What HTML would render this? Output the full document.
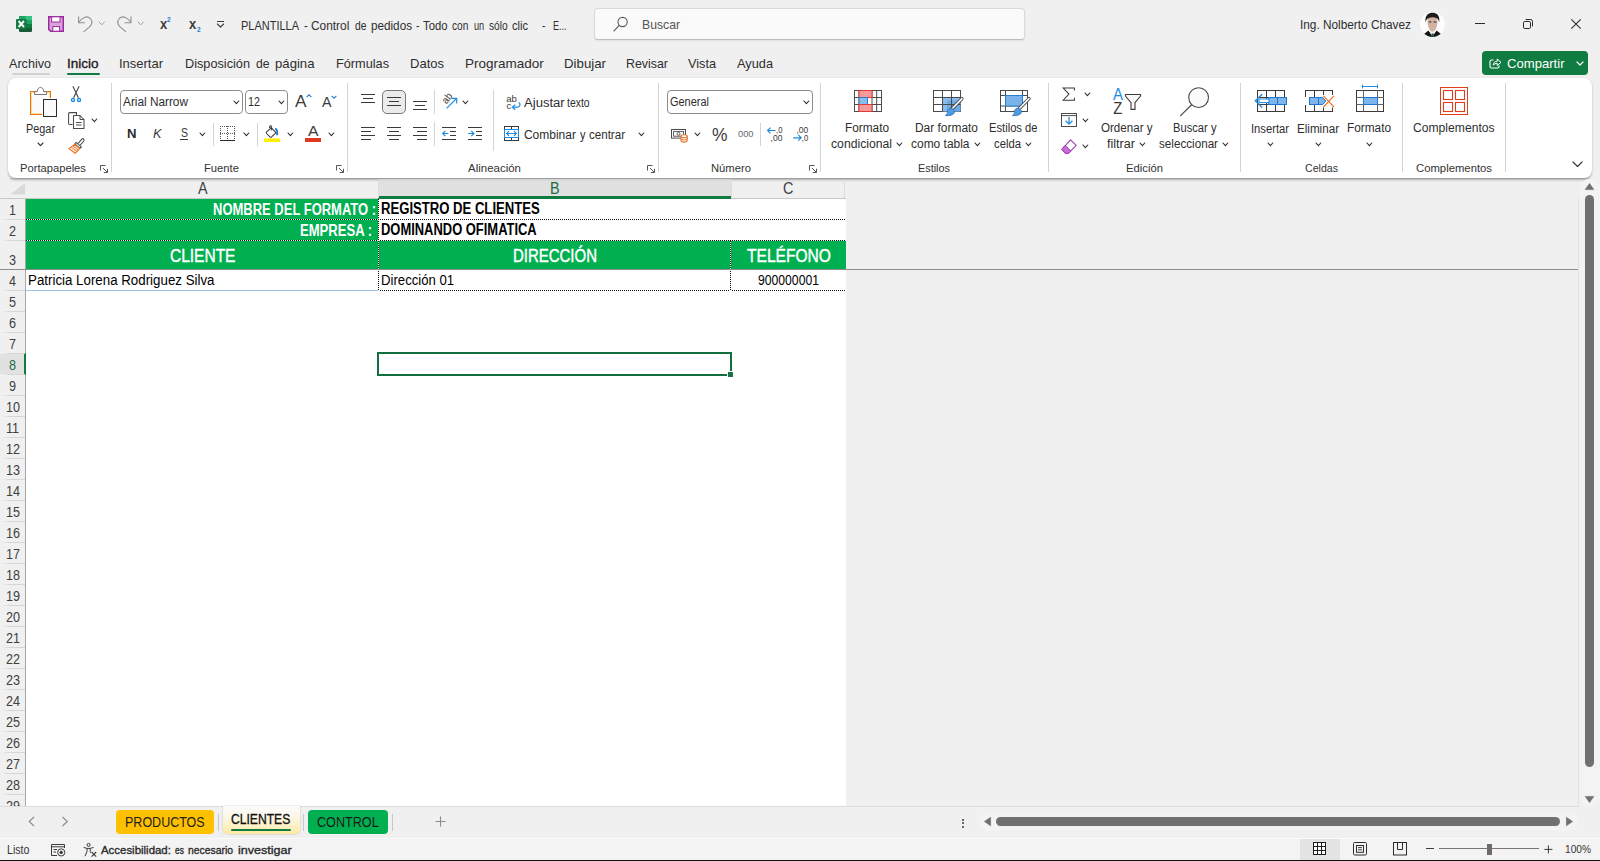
<!DOCTYPE html>
<html lang="es"><head><meta charset="utf-8"><title>Excel</title>
<style>
html,body{margin:0;padding:0;}
body{width:1600px;height:861px;position:relative;overflow:hidden;background:#f0f0f0;font-family:"Liberation Sans",sans-serif;}
body div,body svg,body span.t{position:absolute;}
span.t{white-space:pre;line-height:1;transform-origin:0 50%;}
svg{overflow:visible;}
</style></head><body>
<svg style="left:16px;top:16px;" width="16" height="16" viewBox="0 0 16 16">
<rect x="3" y="0" width="13" height="16" rx="1" fill="#185c37"/>
<rect x="3" y="0" width="13" height="8" fill="#21a366"/>
<rect x="9.5" y="0" width="6.5" height="4" fill="#33c481"/>
<rect x="3" y="4" width="6.5" height="4" fill="#107c41"/>
<rect x="9.5" y="8" width="6.5" height="4" fill="#107c41"/>
<rect x="0" y="3" width="10.7" height="10" rx="1" fill="#107c41"/>
<path d="M2.6 5 L8 11 M8 5 L2.6 11" stroke="#fff" stroke-width="1.9" fill="none"/>
</svg>
<svg style="left:48px;top:16px;" width="16" height="16" viewBox="0 0 16 16">
<path d="M0.75 0.75 H15.25 V15.25 H2.6 L0.75 13.4 Z" fill="#dba3dc" stroke="#9a2a9c" stroke-width="1.5"/>
<rect x="3.6" y="0.8" width="8.4" height="5.2" fill="#fdfdfd" stroke="#9a2a9c" stroke-width="1"/>
<rect x="4.8" y="10.6" width="6.8" height="4.6" fill="#fdfdfd" stroke="#9a2a9c" stroke-width="1"/>
</svg>
<svg style="left:78px;top:16px;" width="15" height="16" viewBox="0 0 15 16">
<path d="M0.6 0.5 V6.8 H7" fill="none" stroke="#919191" stroke-width="1.1"/>
<path d="M0.8 6.6 C3.5 1.5 9 -0.8 12.3 2.5 C15 5.6 13.8 8.6 11.5 10.8 L5.6 15.8" fill="none" stroke="#919191" stroke-width="1.1"/>
</svg>
<svg style="left:98.25px;top:21.1px;" width="7.5" height="4.8" viewBox="0 0 7.5 4.8"><path d="M1 1 L3.75 3.8 L6.5 1" fill="none" stroke="#a0a0a0" stroke-width="1" stroke-linecap="round" stroke-linejoin="round"/></svg>
<svg style="left:117px;top:16px;" width="15" height="16" viewBox="0 0 15 16">
<g transform="translate(14.6,0) scale(-1,1)">
<path d="M0.6 0.5 V6.8 H7" fill="none" stroke="#919191" stroke-width="1.1"/>
<path d="M0.8 6.6 C3.5 1.5 9 -0.8 12.3 2.5 C15 5.6 13.8 8.6 11.5 10.8 L5.6 15.8" fill="none" stroke="#919191" stroke-width="1.1"/>
</g>
</svg>
<svg style="left:137.25px;top:21.1px;" width="7.5" height="4.8" viewBox="0 0 7.5 4.8"><path d="M1 1 L3.75 3.8 L6.5 1" fill="none" stroke="#a0a0a0" stroke-width="1" stroke-linecap="round" stroke-linejoin="round"/></svg>
<span class="t" style="left:160.00px;top:17px;font-size:14px;color:#3b3b3b;transform:scaleX(0.9250);font-weight:700;">x</span>
<span class="t" style="left:167.30px;top:16px;font-size:7px;color:#1e78d0;transform:scaleX(0.9250);font-weight:700;">2</span>
<span class="t" style="left:189.00px;top:17px;font-size:14px;color:#3b3b3b;transform:scaleX(0.9250);font-weight:700;">x</span>
<span class="t" style="left:196.50px;top:26px;font-size:7px;color:#1e78d0;transform:scaleX(0.9250);font-weight:700;">2</span>
<div style="left:217px;top:21px;width:7px;height:1px;background:#3b3b3b;"></div>
<svg style="left:216px;top:23px;" width="9" height="6" viewBox="0 0 9 6"><path d="M1.4 1 L4.5 4.1 L7.6 1" stroke="#3b3b3b" stroke-width="1.1" fill="none" stroke-linejoin="round" stroke-linecap="round"/></svg>
<span class="t" style="left:241.30px;top:19px;font-size:13.3px;color:#2e2e2e;transform:scaleX(0.8259);">PLANTILLA</span>
<span class="t" style="left:304.00px;top:19px;font-size:13.3px;color:#2e2e2e;transform:scaleX(0.8580);">-</span>
<span class="t" style="left:311.40px;top:19px;font-size:13.3px;color:#2e2e2e;transform:scaleX(0.8932);">Control</span>
<span class="t" style="left:354.60px;top:19px;font-size:13.3px;color:#2e2e2e;transform:scaleX(0.7708);">de</span>
<span class="t" style="left:370.50px;top:19px;font-size:13.3px;color:#2e2e2e;transform:scaleX(0.8800);">pedidos</span>
<span class="t" style="left:416.20px;top:19px;font-size:13.3px;color:#2e2e2e;transform:scaleX(0.7677);">-</span>
<span class="t" style="left:423.40px;top:19px;font-size:13.3px;color:#2e2e2e;transform:scaleX(0.8497);">Todo</span>
<span class="t" style="left:452.30px;top:19px;font-size:13.3px;color:#2e2e2e;transform:scaleX(0.7649);">con</span>
<span class="t" style="left:474.00px;top:19px;font-size:13.3px;color:#2e2e2e;transform:scaleX(0.6897);">un</span>
<span class="t" style="left:488.90px;top:19px;font-size:13.3px;color:#2e2e2e;transform:scaleX(0.7666);">sólo</span>
<span class="t" style="left:512.20px;top:19px;font-size:13.3px;color:#2e2e2e;transform:scaleX(0.8331);">clic</span>
<span class="t" style="left:542.00px;top:19px;font-size:13.3px;color:#2e2e2e;transform:scaleX(0.7677);">-</span>
<span class="t" style="left:553.00px;top:19px;font-size:13.3px;color:#2e2e2e;transform:scaleX(0.6717);">E...</span>
<div style="left:593.5px;top:8px;width:431.5px;height:32px;background:#fafafa;border:1px solid #d9d9d9;border-bottom-color:#bdbdbd;border-radius:4px;box-sizing:border-box;box-shadow:0 1px 2px rgba(0,0,0,0.07);"></div>
<svg style="left:613px;top:16px;" width="16" height="16" viewBox="0 0 16 16"><circle cx="9.6" cy="6" r="4.6" fill="none" stroke="#5a5a5a" stroke-width="1.1"/><path d="M6.3 9.4 L1 14.8" stroke="#5a5a5a" stroke-width="1.2" stroke-linecap="round"/></svg>
<span class="t" style="left:642.00px;top:18px;font-size:13.3px;color:#555;transform:scaleX(0.9181);">Buscar</span>
<span class="t" style="left:1300.00px;top:18px;font-size:13px;color:#2e2e2e;transform:scaleX(0.9089);">Ing. Nolberto Chavez</span>
<svg style="left:1419.5px;top:11.5px;" width="25" height="25" viewBox="0 0 25 25">
<defs><clipPath id="av"><circle cx="12.5" cy="12.5" r="12.4"/></clipPath></defs>
<g clip-path="url(#av)">
<rect width="25" height="25" fill="#fdfdfd"/>
<path d="M3 25 L3.4 22.6 L8.4 18.4 L12.5 24 L16.6 18.4 L21.6 22.6 L22 25 Z" fill="#141414"/>
<path d="M9 18.6 L12.5 25 L16 18.6 Z" fill="#efefef"/>
<path d="M11.6 21.6 H13.6 L14 25 H11.2 Z" fill="#1a5a34"/>
<path d="M7.6 9.5 C7.6 5 9.6 3.6 12.5 3.6 C15.4 3.6 17.4 5 17.4 9.5 C17.4 14.8 15.4 19.4 12.5 19.4 C9.6 19.4 7.6 14.8 7.6 9.5 Z" fill="#d2b3a2"/>
<path d="M5.6 10.5 C4.6 3.2 8.6 0.8 12.5 0.8 C16.6 0.8 20.2 3.2 19.2 10.5 C18.6 7 17.6 5.6 12.5 5.2 C7.6 5.6 6.4 7 5.6 10.5 Z" fill="#1f1d1c"/>
<rect x="8.6" y="9.3" width="2.8" height="1.3" fill="#55504d"/><rect x="13.6" y="9.3" width="2.8" height="1.3" fill="#55504d"/>
</g></svg>
<div style="left:1475px;top:23px;width:10px;height:1px;background:#2b2b2b;"></div>
<svg style="left:1523px;top:19px;" width="10" height="10" viewBox="0 0 10 10"><rect x="0.5" y="2.5" width="7" height="7" rx="1.3" fill="none" stroke="#2b2b2b" stroke-width="1"/><path d="M2.6 0.5 H7.6 Q9.5 0.5 9.5 2.4 V7.4" fill="none" stroke="#2b2b2b" stroke-width="1"/></svg>
<svg style="left:1571px;top:19px;" width="10" height="10" viewBox="0 0 10 10"><path d="M0.3 0.3 L9.7 9.7 M9.7 0.3 L0.3 9.7" stroke="#2b2b2b" stroke-width="1.05" fill="none"/></svg>
<span class="t" style="left:9.00px;top:57px;font-size:13.5px;color:#2e2e2e;transform:scaleX(0.9329);">Archivo</span>
<span class="t" style="left:67.00px;top:57px;font-size:13.5px;color:#1b1b1b;-webkit-text-stroke:0.35px #1b1b1b;">Inicio</span>
<span class="t" style="left:119.00px;top:57px;font-size:13.5px;color:#2e2e2e;transform:scaleX(0.9614);">Insertar</span>
<span class="t" style="left:185.00px;top:57px;font-size:13.5px;color:#2e2e2e;transform:scaleX(0.9417);">Disposición</span>
<span class="t" style="left:255.50px;top:57px;font-size:13.5px;color:#2e2e2e;transform:scaleX(0.8993);">de</span>
<span class="t" style="left:275.00px;top:57px;font-size:13.5px;color:#2e2e2e;transform:scaleX(0.9740);">página</span>
<span class="t" style="left:336.00px;top:57px;font-size:13.5px;color:#2e2e2e;transform:scaleX(0.9419);">Fórmulas</span>
<span class="t" style="left:410.00px;top:57px;font-size:13.5px;color:#2e2e2e;transform:scaleX(0.9642);">Datos</span>
<span class="t" style="left:465.00px;top:57px;font-size:13.5px;color:#2e2e2e;">Programador</span>
<span class="t" style="left:564.00px;top:57px;font-size:13.5px;color:#2e2e2e;transform:scaleX(0.9820);">Dibujar</span>
<span class="t" style="left:626.00px;top:57px;font-size:13.5px;color:#2e2e2e;transform:scaleX(0.9177);">Revisar</span>
<span class="t" style="left:688.00px;top:57px;font-size:13.5px;color:#2e2e2e;transform:scaleX(0.9402);">Vista</span>
<span class="t" style="left:737.00px;top:57px;font-size:13.5px;color:#2e2e2e;transform:scaleX(0.9463);">Ayuda</span>
<div style="left:12px;top:73px;width:38px;height:2px;background:#d2d2d2;border-radius:1px;"></div>
<div style="left:67px;top:73px;width:33px;height:2px;background:#107c41;border-radius:1px;"></div>
<div style="left:1482px;top:51px;width:106px;height:23.5px;background:#107c41;border-radius:4px;"></div>
<svg style="left:1489px;top:57px;" width="13" height="12" viewBox="0 0 13 12"><path d="M4.6 3 H2.4 Q1 3 1 4.4 V9.6 Q1 11 2.4 11 H8.6 Q10 11 10 9.6 V8.6" fill="none" stroke="#fff" stroke-width="1.1"/>
<path d="M4.2 8.2 C4.4 5.6 6 4.3 8.2 4.2 V2 L12 5.3 L8.2 8.5 V6.4 C6.6 6.3 5.2 6.9 4.2 8.2 Z" fill="none" stroke="#fff" stroke-width="1" stroke-linejoin="round"/></svg>
<span class="t" style="left:1506.50px;top:57px;font-size:13.5px;color:#fff;transform:scaleX(0.9702);">Compartir</span>
<svg style="left:1575.5px;top:61.0px;" width="8" height="5" viewBox="0 0 8 5"><path d="M1 1 L4.0 4 L7 1" fill="none" stroke="#fff" stroke-width="1.2" stroke-linecap="round" stroke-linejoin="round"/></svg>
<div style="left:8px;top:78px;width:1584px;height:100px;background:#ffffff;border-radius:8px;box-shadow:0 1.5px 2.5px rgba(0,0,0,0.20),0 0.5px 1px rgba(0,0,0,0.10);"></div>
<div style="left:111px;top:83px;width:1px;height:89px;background:#d4d4d4;"></div>
<div style="left:347px;top:83px;width:1px;height:89px;background:#d4d4d4;"></div>
<div style="left:658px;top:83px;width:1px;height:89px;background:#d4d4d4;"></div>
<div style="left:820px;top:83px;width:1px;height:89px;background:#d4d4d4;"></div>
<div style="left:1048px;top:83px;width:1px;height:89px;background:#d4d4d4;"></div>
<div style="left:1240px;top:83px;width:1px;height:89px;background:#d4d4d4;"></div>
<div style="left:1402px;top:83px;width:1px;height:89px;background:#d4d4d4;"></div>
<div style="left:1505px;top:83px;width:1px;height:89px;background:#d4d4d4;"></div>
<span class="t" style="left:19.90px;top:162px;font-size:11.7px;color:#333;transform:scaleX(0.9572);">Portapapeles</span>
<svg style="left:100px;top:164.5px;" width="8" height="8" viewBox="0 0 8 8"><path d="M0.5 5.5 V0.5 H5.5" fill="none" stroke="#555" stroke-width="1"/><path d="M3 3 L7 7 M7.5 3.8 V7.5 H3.8" fill="none" stroke="#555" stroke-width="1"/></svg>
<span class="t" style="left:203.90px;top:162px;font-size:11.7px;color:#333;transform:scaleX(0.9610);">Fuente</span>
<svg style="left:336px;top:164.5px;" width="8" height="8" viewBox="0 0 8 8"><path d="M0.5 5.5 V0.5 H5.5" fill="none" stroke="#555" stroke-width="1"/><path d="M3 3 L7 7 M7.5 3.8 V7.5 H3.8" fill="none" stroke="#555" stroke-width="1"/></svg>
<span class="t" style="left:467.90px;top:162px;font-size:11.7px;color:#333;transform:scaleX(0.9818);">Alineación</span>
<svg style="left:647px;top:164.5px;" width="8" height="8" viewBox="0 0 8 8"><path d="M0.5 5.5 V0.5 H5.5" fill="none" stroke="#555" stroke-width="1"/><path d="M3 3 L7 7 M7.5 3.8 V7.5 H3.8" fill="none" stroke="#555" stroke-width="1"/></svg>
<span class="t" style="left:710.90px;top:162px;font-size:11.7px;color:#333;transform:scaleX(0.9611);">Número</span>
<svg style="left:809px;top:164.5px;" width="8" height="8" viewBox="0 0 8 8"><path d="M0.5 5.5 V0.5 H5.5" fill="none" stroke="#555" stroke-width="1"/><path d="M3 3 L7 7 M7.5 3.8 V7.5 H3.8" fill="none" stroke="#555" stroke-width="1"/></svg>
<span class="t" style="left:917.90px;top:162px;font-size:11.7px;color:#333;transform:scaleX(0.9287);">Estilos</span>
<span class="t" style="left:1125.90px;top:162px;font-size:11.7px;color:#333;transform:scaleX(0.9641);">Edición</span>
<span class="t" style="left:1304.90px;top:162px;font-size:11.7px;color:#333;transform:scaleX(0.9060);">Celdas</span>
<span class="t" style="left:1415.80px;top:162px;font-size:11.7px;color:#333;transform:scaleX(0.9672);">Complementos</span>
<svg style="left:1572px;top:161px;" width="11" height="7" viewBox="0 0 11 7"><path d="M1 1 L5.5 5.5 L10 1" fill="none" stroke="#333" stroke-width="1.1" stroke-linecap="round" stroke-linejoin="round"/></svg>
<svg style="left:29px;top:86px;" width="29" height="32" viewBox="0 0 29 32">
<rect x="1.5" y="5.5" width="20" height="23" fill="#fbfbfb" stroke="#e8740c" stroke-width="1"/>
<rect x="2.5" y="6.5" width="18" height="21" fill="none" stroke="#fbdf9f" stroke-width="1"/>
<path d="M5.5 8.5 V5.6 H8.3 C8.3 2.6 9.8 1.5 11.5 1.5 C13.2 1.5 14.7 2.6 14.7 5.6 H17.5 V8.5 Z" fill="#fff" stroke="#767676" stroke-width="1"/>
<rect x="13" y="12" width="16" height="20" fill="#fff"/>
<rect x="14.5" y="13.5" width="13" height="17" fill="#fbfbfb" stroke="#2b2b2b" stroke-width="1"/>
</svg>
<span class="t" style="left:25.90px;top:123px;font-size:12px;color:#2e2e2e;transform:scaleX(0.9058);">Pegar</span>
<svg style="left:37.1px;top:142.0px;" width="7" height="4.6" viewBox="0 0 7 4.6"><path d="M1 1 L3.5 3.6 L6 1" fill="none" stroke="#333" stroke-width="1.1" stroke-linecap="round" stroke-linejoin="round"/></svg>
<svg style="left:70px;top:86px;" width="12" height="17" viewBox="0 0 12 17">
<path d="M2.9 0.3 L8.4 11.8 M9.1 0.3 L3.6 11.8" stroke="#4a4542" stroke-width="1.1" fill="none"/>
<circle cx="3" cy="13.9" r="1.6" fill="#d6ecfb" stroke="#1e8ae0" stroke-width="1.3"/>
<circle cx="9" cy="13.9" r="1.6" fill="#d6ecfb" stroke="#1e8ae0" stroke-width="1.3"/>
</svg>
<svg style="left:67.5px;top:111.5px;" width="17" height="17" viewBox="0 0 17 17">
<path d="M4.5 12.5 H1.7 Q0.6 12.5 0.6 11.4 V1.7 Q0.6 0.6 1.7 0.6 H8.5 V3" fill="none" stroke="#4a4a4a" stroke-width="1.05"/>
<path d="M5.5 3.5 H12 L16 7.5 V16.4 H5.5 Z" fill="#fff" stroke="#4a4a4a" stroke-width="1.05" stroke-linejoin="round"/>
<path d="M12 3.5 V7.5 H16" fill="none" stroke="#4a4a4a" stroke-width="1"/>
<path d="M8 10.5 H13.5 M8 13 H13.5" stroke="#4a4a4a" stroke-width="1"/>
</svg>
<svg style="left:91.1px;top:117.7px;" width="6.8" height="4.6" viewBox="0 0 6.8 4.6"><path d="M1 1 L3.4 3.6 L5.8 1" fill="none" stroke="#2b2b2b" stroke-width="1.1" stroke-linecap="round" stroke-linejoin="round"/></svg>
<svg style="left:68px;top:137.5px;" width="17" height="16" viewBox="0 0 17 16">
<path d="M10.2 5.4 L13.8 1.2 Q14.8 0.2 15.8 1.1 Q16.6 2 15.7 3 L12.3 7.2" fill="#fff" stroke="#4a4a4a" stroke-width="1.05"/>
<path d="M8.2 4.4 L13.4 8.8 L12 10.4 L6.8 6 Z" fill="#fff" stroke="#4a4a4a" stroke-width="1.05" stroke-linejoin="round"/>
<path d="M6.6 6.4 L0.8 10.6 L7.2 15.3 L11.6 10.6 Z" fill="#fbe3cf" stroke="#e8742a" stroke-width="1.1" stroke-linejoin="round"/>
<path d="M3.3 9.2 L8.9 13.5 M5 8 L10.2 12.1" stroke="#e8742a" stroke-width="0.9" fill="none"/>
</svg>
<div style="left:120px;top:90px;width:122.5px;height:24px;background:#fff;border:1px solid #8d8d8d;border-radius:4px;box-sizing:border-box;"></div>
<span class="t" style="left:123.40px;top:96px;font-size:12px;color:#2e2e2e;transform:scaleX(0.9841);">Arial Narrow</span>
<svg style="left:233.1px;top:100.2px;" width="6.8" height="4.6" viewBox="0 0 6.8 4.6"><path d="M1 1 L3.4 3.6 L5.8 1" fill="none" stroke="#2b2b2b" stroke-width="1.1" stroke-linecap="round" stroke-linejoin="round"/></svg>
<div style="left:245px;top:90px;width:42.5px;height:24px;background:#fff;border:1px solid #8d8d8d;border-radius:4px;box-sizing:border-box;"></div>
<span class="t" style="left:248.40px;top:96px;font-size:12px;color:#2e2e2e;transform:scaleX(0.8993);">12</span>
<svg style="left:277.6px;top:100.2px;" width="6.8" height="4.6" viewBox="0 0 6.8 4.6"><path d="M1 1 L3.4 3.6 L5.8 1" fill="none" stroke="#2b2b2b" stroke-width="1.1" stroke-linecap="round" stroke-linejoin="round"/></svg>
<span class="t" style="left:295.00px;top:93px;font-size:16.5px;color:#3b3b3b;transform:scaleX(1.0449);">A</span>
<svg style="left:305.5px;top:94px;" width="6" height="4" viewBox="0 0 6 4"><path d="M0.6 3.2 L3 0.8 L5.4 3.2" fill="none" stroke="#2b7cd3" stroke-width="1.1"/></svg>
<span class="t" style="left:322.00px;top:95px;font-size:14px;color:#3b3b3b;transform:scaleX(1.0173);">A</span>
<svg style="left:331px;top:94.5px;" width="6" height="4" viewBox="0 0 6 4"><path d="M0.6 0.8 L3 3.2 L5.4 0.8" fill="none" stroke="#2b7cd3" stroke-width="1.1"/></svg>
<span class="t" style="left:127.00px;top:127px;font-size:13.5px;color:#2b2b2b;transform:scaleX(0.9747);font-weight:700;">N</span>
<span class="t" style="left:153.00px;top:127px;font-size:13.5px;color:#3b3b3b;transform:scaleX(0.9470);font-style:italic;">K</span>
<span class="t" style="left:180.50px;top:126px;font-size:13px;color:#3b3b3b;transform:scaleX(0.8073);">S</span>
<div style="left:179.5px;top:139.3px;width:8.5px;height:1px;background:#3b3b3b;"></div>
<svg style="left:199.1px;top:131.7px;" width="6.8" height="4.6" viewBox="0 0 6.8 4.6"><path d="M1 1 L3.4 3.6 L5.8 1" fill="none" stroke="#2b2b2b" stroke-width="1.1" stroke-linecap="round" stroke-linejoin="round"/></svg>
<div style="left:213px;top:122.5px;width:1px;height:23.0px;background:#d4d4d4;"></div>
<div style="left:220px;top:126px;width:15px;height:1px;background:repeating-linear-gradient(90deg,#5a5a5a 0 1px,transparent 1px 2px);"></div>
<div style="left:220px;top:133px;width:15px;height:1px;background:repeating-linear-gradient(90deg,#5a5a5a 0 1px,transparent 1px 2px);"></div>
<div style="left:220px;top:126px;width:1px;height:14px;background:repeating-linear-gradient(180deg,#5a5a5a 0 1px,transparent 1px 2px);"></div>
<div style="left:227px;top:126px;width:1px;height:14px;background:repeating-linear-gradient(180deg,#5a5a5a 0 1px,transparent 1px 2px);"></div>
<div style="left:234px;top:126px;width:1px;height:14px;background:repeating-linear-gradient(180deg,#5a5a5a 0 1px,transparent 1px 2px);"></div>
<div style="left:220px;top:139.5px;width:15px;height:1.5px;background:#2b2b2b;"></div>
<svg style="left:243.1px;top:131.7px;" width="6.8" height="4.6" viewBox="0 0 6.8 4.6"><path d="M1 1 L3.4 3.6 L5.8 1" fill="none" stroke="#2b2b2b" stroke-width="1.1" stroke-linecap="round" stroke-linejoin="round"/></svg>
<div style="left:257px;top:122.5px;width:1px;height:23.0px;background:#d4d4d4;"></div>
<svg style="left:263.8px;top:124.5px;" width="17" height="17" viewBox="0 0 17 17">
<path d="M6.2 1.6 L12 7.6 L7.6 11.9 Q6.8 12.6 6 11.9 L2.6 8.5 Q1.9 7.7 2.6 6.9 L7.4 2.8" fill="#fff" stroke="#3d3938" stroke-width="1.05" stroke-linejoin="round"/>
<path d="M7.6 5.4 V1.6 Q7.6 0.5 6.6 0.5 Q5.6 0.5 5.6 1.6 V3.2" fill="none" stroke="#3d3938" stroke-width="1"/>
<path d="M11.2 3.6 C13.2 4.6 13.6 7 12.9 10.2" fill="none" stroke="#1e6fd0" stroke-width="1.7"/>
<rect x="0" y="13.5" width="16.2" height="3.5" fill="#ffee00"/>
</svg>
<svg style="left:286.8px;top:131.7px;" width="6.8" height="4.6" viewBox="0 0 6.8 4.6"><path d="M1 1 L3.4 3.6 L5.8 1" fill="none" stroke="#2b2b2b" stroke-width="1.1" stroke-linecap="round" stroke-linejoin="round"/></svg>
<span class="t" style="left:308.00px;top:124px;font-size:14.5px;color:#3b3b3b;transform:scaleX(1.0857);">A</span>
<div style="left:305px;top:138px;width:15.7px;height:3.5px;background:#e03a1e;"></div>
<svg style="left:328.1px;top:131.7px;" width="6.8" height="4.6" viewBox="0 0 6.8 4.6"><path d="M1 1 L3.4 3.6 L5.8 1" fill="none" stroke="#2b2b2b" stroke-width="1.1" stroke-linecap="round" stroke-linejoin="round"/></svg>
<div style="left:361px;top:94px;width:14px;height:1px;background:#3d3938;"></div>
<div style="left:363px;top:98px;width:10px;height:1px;background:#3d3938;"></div>
<div style="left:361px;top:102px;width:14px;height:1px;background:#3d3938;"></div>
<div style="left:382px;top:90px;width:24px;height:24px;background:#ebebeb;border:1px solid #7d7674;border-radius:5px;box-sizing:border-box;"></div>
<div style="left:387px;top:97px;width:14px;height:1px;background:#3d3938;"></div>
<div style="left:389px;top:101px;width:10px;height:1px;background:#3d3938;"></div>
<div style="left:387px;top:105px;width:14px;height:1px;background:#3d3938;"></div>
<div style="left:413px;top:101px;width:14px;height:1px;background:#3d3938;"></div>
<div style="left:415px;top:105px;width:10px;height:1px;background:#3d3938;"></div>
<div style="left:413px;top:109px;width:14px;height:1px;background:#3d3938;"></div>
<div style="left:434px;top:90px;width:1px;height:24px;background:#d4d4d4;"></div>
<svg style="left:440px;top:92px;" width="18" height="18" viewBox="0 0 18 18">
<text x="0" y="0" font-family="Liberation Sans, sans-serif" font-size="10.5" fill="#3d3938" transform="translate(6.6,12.4) rotate(-52)" textLength="10.5" lengthAdjust="spacingAndGlyphs">ab</text>
<path d="M6.6 16.4 L16.4 6.6" stroke="#1e8ae0" stroke-width="1.2" fill="none"/>
<path d="M11.6 6.3 L16.7 6.3 L16.7 11.4" stroke="#1e8ae0" stroke-width="1.2" fill="none" stroke-linejoin="miter"/>
</svg>
<svg style="left:462.1px;top:100.2px;" width="6.8" height="4.6" viewBox="0 0 6.8 4.6"><path d="M1 1 L3.4 3.6 L5.8 1" fill="none" stroke="#2b2b2b" stroke-width="1.1" stroke-linecap="round" stroke-linejoin="round"/></svg>
<div style="left:493px;top:89.5px;width:1px;height:61.0px;background:#d4d4d4;"></div>
<svg style="left:506px;top:94px;" width="15" height="17" viewBox="0 0 15 17">
<text x="0.2" y="7.6" font-family="Liberation Sans, sans-serif" font-size="9.6" fill="#3d3938">ab</text>
<text x="0.6" y="15.4" font-family="Liberation Sans, sans-serif" font-size="9.6" fill="#3d3938">c</text>
<path d="M12.6 8.5 C14.8 9.6 14.4 13.2 11.6 13.2 H6.6" stroke="#1e8ae0" stroke-width="1.2" fill="none"/>
<path d="M9.2 10.6 L6.4 13.2 L9.2 15.8" stroke="#1e8ae0" stroke-width="1.2" fill="none"/>
</svg>
<span class="t" style="left:523.70px;top:97px;font-size:12px;color:#2e2e2e;transform:scaleX(1.0899);">Ajustar</span>
<span class="t" style="left:567.40px;top:97px;font-size:12px;color:#2e2e2e;transform:scaleX(0.8687);">texto</span>
<div style="left:361px;top:127px;width:14px;height:1px;background:#3d3938;"></div>
<div style="left:361px;top:131px;width:10px;height:1px;background:#3d3938;"></div>
<div style="left:361px;top:135px;width:14px;height:1px;background:#3d3938;"></div>
<div style="left:361px;top:139px;width:10px;height:1px;background:#3d3938;"></div>
<div style="left:387px;top:127px;width:14px;height:1px;background:#3d3938;"></div>
<div style="left:389px;top:131px;width:10px;height:1px;background:#3d3938;"></div>
<div style="left:387px;top:135px;width:14px;height:1px;background:#3d3938;"></div>
<div style="left:389px;top:139px;width:10px;height:1px;background:#3d3938;"></div>
<div style="left:413px;top:127px;width:14px;height:1px;background:#3d3938;"></div>
<div style="left:417px;top:131px;width:10px;height:1px;background:#3d3938;"></div>
<div style="left:413px;top:135px;width:14px;height:1px;background:#3d3938;"></div>
<div style="left:417px;top:139px;width:10px;height:1px;background:#3d3938;"></div>
<div style="left:434px;top:122px;width:1px;height:24px;background:#d4d4d4;"></div>
<div style="left:442px;top:127px;width:14px;height:1px;background:#3d3938;"></div>
<div style="left:450px;top:131px;width:6px;height:1px;background:#3d3938;"></div>
<div style="left:450px;top:135px;width:6px;height:1px;background:#3d3938;"></div>
<div style="left:442px;top:139px;width:14px;height:1px;background:#3d3938;"></div>
<svg style="left:442px;top:129px;" width="8" height="9" viewBox="0 0 8 9"><path d="M0.8 4.5 H6.4 M3.3 1.8 L0.7 4.5 L3.3 7.2" stroke="#1e8ae0" stroke-width="1.2" fill="none"/></svg>
<div style="left:468px;top:127px;width:14px;height:1px;background:#3d3938;"></div>
<div style="left:476px;top:131px;width:6px;height:1px;background:#3d3938;"></div>
<div style="left:476px;top:135px;width:6px;height:1px;background:#3d3938;"></div>
<div style="left:468px;top:139px;width:14px;height:1px;background:#3d3938;"></div>
<svg style="left:468px;top:129px;" width="8" height="9" viewBox="0 0 8 9"><path d="M0.2 4.5 H5.8 M3.3 1.8 L5.9 4.5 L3.3 7.2" stroke="#1e8ae0" stroke-width="1.2" fill="none"/></svg>
<svg style="left:504px;top:126px;" width="15" height="15" viewBox="0 0 15 15">
<rect x="0.5" y="0.5" width="14" height="14" fill="#fff" stroke="#3d3938" stroke-width="1"/>
<path d="M7.5 0.5 V3.5 M7.5 11.5 V14.5" stroke="#3d3938" stroke-width="1" fill="none"/>
<rect x="0.5" y="3.5" width="14" height="8" fill="#fff" stroke="#1e8ae0" stroke-width="1"/>
<path d="M2.8 7.5 H12.2 M5 5.2 L2.7 7.5 L5 9.8 M10 5.2 L12.3 7.5 L10 9.8" stroke="#1e8ae0" stroke-width="1.2" fill="none"/>
</svg>
<span class="t" style="left:523.90px;top:129px;font-size:12px;color:#2e2e2e;">Combinar</span>
<span class="t" style="left:579.90px;top:129px;font-size:12px;color:#2e2e2e;transform:scaleX(0.9167);">y</span>
<span class="t" style="left:589.40px;top:129px;font-size:12px;color:#2e2e2e;transform:scaleX(0.9640);">centrar</span>
<svg style="left:638.4px;top:131.7px;" width="6.8" height="4.6" viewBox="0 0 6.8 4.6"><path d="M1 1 L3.4 3.6 L5.8 1" fill="none" stroke="#2b2b2b" stroke-width="1.1" stroke-linecap="round" stroke-linejoin="round"/></svg>
<div style="left:667px;top:90px;width:145.5px;height:24px;background:#fff;border:1px solid #8d8d8d;border-radius:4px;box-sizing:border-box;"></div>
<span class="t" style="left:669.90px;top:96px;font-size:12px;color:#2e2e2e;transform:scaleX(0.9134);">General</span>
<svg style="left:803.1px;top:100.2px;" width="6.8" height="4.6" viewBox="0 0 6.8 4.6"><path d="M1 1 L3.4 3.6 L5.8 1" fill="none" stroke="#2b2b2b" stroke-width="1.1" stroke-linecap="round" stroke-linejoin="round"/></svg>
<svg style="left:671px;top:128.5px;" width="17.5" height="14" viewBox="0 0 17.5 14">
<rect x="0.5" y="0.5" width="14" height="8.6" fill="#fff" stroke="#4a4a4a" stroke-width="1"/>
<rect x="2.6" y="2.4" width="9.8" height="4.8" fill="none" stroke="#4a4a4a" stroke-width="0.9"/>
<circle cx="7.5" cy="4.8" r="1.5" fill="none" stroke="#4a4a4a" stroke-width="0.9"/>
<path d="M10 7.2 V11.6 C10 13.6 16.2 13.6 16.2 11.6 V7.2" fill="#fff" stroke="#e8742a" stroke-width="1.1"/>
<ellipse cx="13.1" cy="7.2" rx="3.1" ry="1.5" fill="#fff" stroke="#e8742a" stroke-width="1.1"/>
<path d="M10 9.5 C10 11.4 16.2 11.4 16.2 9.5" fill="none" stroke="#e8742a" stroke-width="1"/>
</svg>
<svg style="left:694.1px;top:131.7px;" width="6.8" height="4.6" viewBox="0 0 6.8 4.6"><path d="M1 1 L3.4 3.6 L5.8 1" fill="none" stroke="#2b2b2b" stroke-width="1.1" stroke-linecap="round" stroke-linejoin="round"/></svg>
<span class="t" style="left:712.00px;top:125px;font-size:19px;color:#3b3b3b;transform:scaleX(0.9176);">%</span>
<span class="t" style="left:738.00px;top:129px;font-size:9.5px;color:#6a6a6a;transform:scaleX(0.9782);">000</span>
<div style="left:760px;top:122.5px;width:1px;height:23.0px;background:#d4d4d4;"></div>
<svg style="left:767px;top:126px;" width="16" height="16" viewBox="0 0 16 16">
<path d="M0.6 4.5 H8.6 M3.5 1.6 L0.6 4.5 L3.5 7.4" stroke="#1e8ae0" stroke-width="1.2" fill="none"/>
<text x="9" y="6.6" font-family="Liberation Sans, sans-serif" font-size="8.6" fill="#3d3938" textLength="6.4" lengthAdjust="spacingAndGlyphs">,0</text>
<text x="3.6" y="14.9" font-family="Liberation Sans, sans-serif" font-size="8.6" fill="#3d3938" textLength="11.8" lengthAdjust="spacingAndGlyphs">,00</text>
</svg>
<svg style="left:793px;top:126px;" width="16" height="16" viewBox="0 0 16 16">
<text x="3.4" y="6.6" font-family="Liberation Sans, sans-serif" font-size="8.6" fill="#3d3938" textLength="11.8" lengthAdjust="spacingAndGlyphs">,00</text>
<path d="M0.2 11.8 H8.2 M5.3 8.9 L8.2 11.8 L5.3 14.7" stroke="#1e8ae0" stroke-width="1.2" fill="none"/>
<text x="8.8" y="14.9" font-family="Liberation Sans, sans-serif" font-size="8.6" fill="#3d3938" textLength="6.4" lengthAdjust="spacingAndGlyphs">,0</text>
</svg>
<svg style="left:854px;top:90px;" width="28" height="22" viewBox="0 0 28 22">
<rect x="0.5" y="0.5" width="27" height="21" fill="#fff" stroke="#4a4a4a" stroke-width="1"/>
<path d="M0.5 7.5 H27.5 M0.5 14.5 H27.5 M5 0.5 V21.5 M18 0.5 V21.5 M22.7 0.5 V21.5" stroke="#4a4a4a" stroke-width="1" fill="none"/>
<rect x="5" y="0.5" width="13" height="7" fill="#f79a9c" stroke="#e03c32" stroke-width="1"/>
<rect x="5" y="7.5" width="8.5" height="7" fill="#8cbcec" stroke="#2b7cd3" stroke-width="1"/>
<rect x="5" y="14.5" width="13" height="7" fill="#f79a9c" stroke="#e03c32" stroke-width="1"/>
</svg>
<span class="t" style="left:844.90px;top:122px;font-size:12px;color:#2e2e2e;transform:scaleX(0.9849);">Formato</span>
<span class="t" style="left:831.40px;top:138px;font-size:12px;color:#2e2e2e;transform:scaleX(1.0161);">condicional</span>
<svg style="left:896.1px;top:141.7px;" width="6.8" height="4.6" viewBox="0 0 6.8 4.6"><path d="M1 1 L3.4 3.6 L5.8 1" fill="none" stroke="#2b2b2b" stroke-width="1.1" stroke-linecap="round" stroke-linejoin="round"/></svg>
<svg style="left:932.5px;top:90px;" width="31" height="27" viewBox="0 0 31 27">
<rect x="0.5" y="0.5" width="27" height="21" fill="#fff" stroke="#4a4a4a" stroke-width="1"/>
<rect x="9.5" y="7.5" width="18" height="14" fill="#8cbcec"/>
<rect x="14" y="10.5" width="13" height="11" fill="#4f9be0" opacity="0.55"/>
<path d="M0.5 7.5 H27.5 M0.5 14.5 H27.5 M9.5 0.5 V21.5 M18.5 0.5 V21.5" stroke="#4a4a4a" stroke-width="1" fill="none"/>

<path d="M29 8.6 L19.6 18.2" stroke="#4a4a4a" stroke-width="3.4" stroke-linecap="round"/>
<path d="M29 8.6 L19.6 18.2" stroke="#fff" stroke-width="1.6" stroke-linecap="round"/>
<path d="M16.4 18.4 c2.2 -0.8 4.6 0.6 5 3 c0.4 2.6 -2.6 4.6 -9 4.2 c1.8 -1.2 2 -2.6 2 -4.2 c0.2 -1.6 0.8 -2.4 2 -3 z" fill="#4f9be0" stroke="#2b6cb8" stroke-width="0.8"/>
</svg>
<span class="t" style="left:914.90px;top:122px;font-size:12px;color:#2e2e2e;transform:scaleX(0.9945);">Dar formato</span>
<span class="t" style="left:911.40px;top:138px;font-size:12px;color:#2e2e2e;transform:scaleX(0.9965);">como tabla</span>
<svg style="left:974.1px;top:141.7px;" width="6.8" height="4.6" viewBox="0 0 6.8 4.6"><path d="M1 1 L3.4 3.6 L5.8 1" fill="none" stroke="#2b2b2b" stroke-width="1.1" stroke-linecap="round" stroke-linejoin="round"/></svg>
<svg style="left:999.5px;top:90px;" width="31" height="27" viewBox="0 0 31 27">
<rect x="0.5" y="0.5" width="27" height="21" fill="#fff" stroke="#4a4a4a" stroke-width="1"/>
<path d="M0.5 5.5 H27.5 M0.5 16 H22 M5.5 0.5 V21.5 M22.5 0.5 V9" stroke="#4a4a4a" stroke-width="1" fill="none"/>
<rect x="5.5" y="5.5" width="17" height="10.5" fill="#7ab3ea" stroke="#2b7cd3" stroke-width="1"/>

<path d="M29 8.6 L19.6 18.2" stroke="#4a4a4a" stroke-width="3.4" stroke-linecap="round"/>
<path d="M29 8.6 L19.6 18.2" stroke="#fff" stroke-width="1.6" stroke-linecap="round"/>
<path d="M16.4 18.4 c2.2 -0.8 4.6 0.6 5 3 c0.4 2.6 -2.6 4.6 -9 4.2 c1.8 -1.2 2 -2.6 2 -4.2 c0.2 -1.6 0.8 -2.4 2 -3 z" fill="#4f9be0" stroke="#2b6cb8" stroke-width="0.8"/>
</svg>
<span class="t" style="left:988.90px;top:122px;font-size:12px;color:#2e2e2e;transform:scaleX(0.9323);">Estilos de</span>
<span class="t" style="left:993.90px;top:138px;font-size:12px;color:#2e2e2e;transform:scaleX(0.9410);">celda</span>
<svg style="left:1025.1px;top:141.7px;" width="6.8" height="4.6" viewBox="0 0 6.8 4.6"><path d="M1 1 L3.4 3.6 L5.8 1" fill="none" stroke="#2b2b2b" stroke-width="1.1" stroke-linecap="round" stroke-linejoin="round"/></svg>
<svg style="left:1062px;top:87px;" width="14" height="14" viewBox="0 0 14 14"><path d="M12.4 3.4 V1 H1.2 L7 7.1 L1.2 13.2 H12.4 V10.8" fill="none" stroke="#3d3938" stroke-width="1.05" stroke-linejoin="miter"/></svg>
<svg style="left:1084.1px;top:92.0px;" width="6.8" height="4.6" viewBox="0 0 6.8 4.6"><path d="M1 1 L3.4 3.6 L5.8 1" fill="none" stroke="#2b2b2b" stroke-width="1.1" stroke-linecap="round" stroke-linejoin="round"/></svg>
<svg style="left:1061px;top:113px;" width="16" height="14" viewBox="0 0 16 14">
<rect x="0.5" y="0.5" width="15" height="13" fill="#fff" stroke="#4a4a4a" stroke-width="1"/>
<path d="M0.5 2.6 H15.5" stroke="#4a4a4a" stroke-width="1"/>
<path d="M8 4 V11.2 M4.6 7.8 L8 11.2 L11.4 7.8" stroke="#1e8ae0" stroke-width="1.25" fill="none"/>
</svg>
<svg style="left:1082.1px;top:117.9px;" width="6.8" height="4.6" viewBox="0 0 6.8 4.6"><path d="M1 1 L3.4 3.6 L5.8 1" fill="none" stroke="#2b2b2b" stroke-width="1.1" stroke-linecap="round" stroke-linejoin="round"/></svg>
<svg style="left:1061px;top:138.5px;" width="16" height="15" viewBox="0 0 16 15">
<path d="M9.6 0.8 L15.2 6.4 L7.6 14.2 H4.4 L0.8 10.4 Z" fill="#fff" stroke="#a03cb4" stroke-width="1.1" stroke-linejoin="round"/>
<path d="M4.2 6.4 L9.9 12 L7.6 14.2 H4.4 L0.8 10.4 Z" fill="#c86fd6" stroke="#a03cb4" stroke-width="1" stroke-linejoin="round"/>
</svg>
<svg style="left:1082.1px;top:144.0px;" width="6.8" height="4.6" viewBox="0 0 6.8 4.6"><path d="M1 1 L3.4 3.6 L5.8 1" fill="none" stroke="#2b2b2b" stroke-width="1.1" stroke-linecap="round" stroke-linejoin="round"/></svg>
<svg style="left:1112px;top:87px;" width="30" height="28" viewBox="0 0 30 28">
<text x="1" y="12.7" font-family="Liberation Sans, sans-serif" font-size="16.6" fill="#1e8ae0" textLength="10" lengthAdjust="spacingAndGlyphs">A</text>
<text x="1.2" y="26.6" font-family="Liberation Sans, sans-serif" font-size="16.6" fill="#3d3938" textLength="9" lengthAdjust="spacingAndGlyphs">Z</text>
<path d="M13.4 7.5 H28.6 V9 L23 15.6 V22.4 H19 V15.6 L13.4 9 Z" fill="#fafafa" stroke="#3d3938" stroke-width="1.1" stroke-linejoin="round"/>
</svg>
<span class="t" style="left:1100.90px;top:122px;font-size:12px;color:#2e2e2e;transform:scaleX(0.9653);">Ordenar y</span>
<span class="t" style="left:1107.40px;top:138px;font-size:12px;color:#2e2e2e;transform:scaleX(1.0501);">filtrar</span>
<svg style="left:1139.1px;top:141.7px;" width="6.8" height="4.6" viewBox="0 0 6.8 4.6"><path d="M1 1 L3.4 3.6 L5.8 1" fill="none" stroke="#2b2b2b" stroke-width="1.1" stroke-linecap="round" stroke-linejoin="round"/></svg>
<svg style="left:1180px;top:87px;" width="30" height="30" viewBox="0 0 30 30"><circle cx="18.6" cy="10.6" r="9.9" fill="#fafafa" stroke="#4a4a4a" stroke-width="1.1"/><path d="M11.6 17.8 L0.6 28.6" stroke="#4a4a4a" stroke-width="1.2" stroke-linecap="round"/></svg>
<span class="t" style="left:1172.90px;top:122px;font-size:12px;color:#2e2e2e;transform:scaleX(0.9319);">Buscar y</span>
<span class="t" style="left:1159.40px;top:138px;font-size:12px;color:#2e2e2e;transform:scaleX(0.9721);">seleccionar</span>
<svg style="left:1222.1px;top:141.7px;" width="6.8" height="4.6" viewBox="0 0 6.8 4.6"><path d="M1 1 L3.4 3.6 L5.8 1" fill="none" stroke="#2b2b2b" stroke-width="1.1" stroke-linecap="round" stroke-linejoin="round"/></svg>
<svg style="left:1254px;top:90px;" width="34" height="22" viewBox="0 0 34 22">
<rect x="3.5" y="0.5" width="27" height="21" fill="#fdfdfd" stroke="#3d3938" stroke-width="1"/>
<path d="M3.5 7.5 H30.5 M3.5 14.5 H30.5 M12.5 0.5 V21.5 M21.5 0.5 V21.5" stroke="#3d3938" stroke-width="1" fill="none"/>
<rect x="14.5" y="7.5" width="18" height="7" fill="#7fb5ea" stroke="#1e76d0" stroke-width="1"/>
<path d="M23.5 7.5 V14.5" stroke="#1e76d0" stroke-width="1"/>
<rect x="5" y="9" width="10" height="3.6" fill="#fff" stroke="#1e8ae0" stroke-width="1"/>
<path d="M8.2 4.2 L1.4 10.8 L8.2 17.4" fill="none" stroke="#1e8ae0" stroke-width="1.4"/>
</svg>
<span class="t" style="left:1250.90px;top:123px;font-size:12px;color:#2e2e2e;transform:scaleX(0.9341);">Insertar</span>
<svg style="left:1266.6px;top:142.4px;" width="6.8" height="4.6" viewBox="0 0 6.8 4.6"><path d="M1 1 L3.4 3.6 L5.8 1" fill="none" stroke="#2b2b2b" stroke-width="1.1" stroke-linecap="round" stroke-linejoin="round"/></svg>
<svg style="left:1305px;top:90px;" width="31" height="22" viewBox="0 0 31 22">
<rect x="0.5" y="0.5" width="27" height="21" fill="#fdfdfd" stroke="#3d3938" stroke-width="1"/>
<path d="M0.5 7.5 H27.5 M0.5 14.5 H27.5 M9.5 0.5 V21.5 M18.5 0.5 V21.5" stroke="#3d3938" stroke-width="1" fill="none"/>
<rect x="17" y="5" width="13" height="12.5" fill="#fdfdfd"/>
<rect x="-1" y="7" width="5" height="8" fill="#fff"/>
<path d="M4.5 7.5 H17.6 L20.8 11 L17.6 14.5 H4.5 Z" fill="#7fb5ea" stroke="#1e76d0" stroke-width="1"/>
<path d="M13.5 7.5 V14.5" stroke="#1e76d0" stroke-width="1"/>
<path d="M18.4 5.8 L29 17 M29 5.8 L18.4 17" stroke="#e8742a" stroke-width="1.1"/>
</svg>
<span class="t" style="left:1296.90px;top:123px;font-size:12px;color:#2e2e2e;transform:scaleX(0.9690);">Eliminar</span>
<svg style="left:1315.1px;top:142.4px;" width="6.8" height="4.6" viewBox="0 0 6.8 4.6"><path d="M1 1 L3.4 3.6 L5.8 1" fill="none" stroke="#2b2b2b" stroke-width="1.1" stroke-linecap="round" stroke-linejoin="round"/></svg>
<svg style="left:1356px;top:84px;" width="28" height="28" viewBox="0 0 28 28">
<path d="M6.5 2.5 H21.5 M6.5 0.6 V4.4 M21.5 0.6 V4.4" stroke="#1e8ae0" stroke-width="1"/>
<rect x="0.5" y="6.5" width="27" height="21" fill="#fdfdfd" stroke="#3d3938" stroke-width="1"/>
<path d="M0.5 13.5 H27.5 M0.5 20.5 H27.5 M7.5 6.5 V27.5 M21.5 6.5 V27.5" stroke="#6b6664" stroke-width="1" fill="none"/>
<rect x="7.5" y="13.5" width="14" height="7" fill="#7fb5ea" stroke="#1e76d0" stroke-width="1"/>
</svg>
<span class="t" style="left:1346.90px;top:122px;font-size:12px;color:#2e2e2e;transform:scaleX(0.9849);">Formato</span>
<svg style="left:1366.1px;top:141.7px;" width="6.8" height="4.6" viewBox="0 0 6.8 4.6"><path d="M1 1 L3.4 3.6 L5.8 1" fill="none" stroke="#2b2b2b" stroke-width="1.1" stroke-linecap="round" stroke-linejoin="round"/></svg>
<svg style="left:1440px;top:87px;" width="28" height="28" viewBox="0 0 28 28">
<rect x="0.5" y="0.5" width="27" height="27" fill="none" stroke="#e03c1e" stroke-width="1"/>
<rect x="3.5" y="3.5" width="9" height="9" fill="none" stroke="#e03c1e" stroke-width="1.1"/>
<rect x="15.5" y="3.5" width="9" height="9" fill="none" stroke="#e03c1e" stroke-width="1.1"/>
<rect x="3.5" y="15.5" width="9" height="9" fill="none" stroke="#e03c1e" stroke-width="1.1"/>
<rect x="15.5" y="15.5" width="9" height="9" fill="none" stroke="#e03c1e" stroke-width="1.1"/>
</svg>
<span class="t" style="left:1412.80px;top:122px;font-size:12px;color:#2e2e2e;transform:scaleX(1.0112);">Complementos</span>
<div style="left:26px;top:199px;width:820px;height:607px;background:#ffffff;"></div>
<div style="left:1578px;top:198px;width:1px;height:608px;background:#e2e2e2;"></div>
<div style="left:0px;top:198px;width:846px;height:1px;background:#c9c9c9;"></div>
<div style="left:25px;top:199px;width:1px;height:607px;background:#a6a6a6;"></div>
<svg style="left:10px;top:183px;" width="15" height="12" viewBox="0 0 15 12"><path d="M15 0 V11.5 H0.5 Z" fill="#d9d9d9"/></svg>
<div style="left:378px;top:179px;width:353px;height:17px;background:#e1e1e1;"></div>
<div style="left:378px;top:196px;width:353px;height:2.5px;background:#107c41;"></div>
<div style="left:378px;top:182px;width:1px;height:16px;background:#dcdcdc;"></div>
<div style="left:731px;top:182px;width:1px;height:16px;background:#dcdcdc;"></div>
<div style="left:844px;top:182px;width:1px;height:16px;background:#dcdcdc;"></div>
<span class="t" style="left:197.60px;top:181px;font-size:16px;color:#3f3f3f;transform:scaleX(0.9000);">A</span>
<span class="t" style="left:549.70px;top:181px;font-size:16px;color:#1e6b41;transform:scaleX(0.9000);">B</span>
<span class="t" style="left:782.80px;top:181px;font-size:16px;color:#3f3f3f;transform:scaleX(0.9000);">C</span>
<div style="left:10px;top:178px;width:1580px;height:4px;background:linear-gradient(180deg,rgba(0,0,0,0.13),rgba(0,0,0,0.03) 60%,transparent);"></div>
<div style="left:26px;top:199px;width:352px;height:42px;background:#00b050;"></div>
<div style="left:26px;top:241px;width:820px;height:28px;background:#00b050;"></div>
<div style="left:26px;top:219px;width:352px;height:1px;background:repeating-linear-gradient(90deg,#111 0 1px,#e6f6ec 1px 2px);"></div>
<div style="left:378px;top:219px;width:468px;height:1px;background:repeating-linear-gradient(90deg,#111 0 1px,transparent 1px 2px);"></div>
<div style="left:26px;top:240px;width:352px;height:1px;background:repeating-linear-gradient(90deg,#111 0 1px,#e6f6ec 1px 2px);"></div>
<div style="left:378px;top:240px;width:468px;height:1px;background:repeating-linear-gradient(90deg,#111 0 1px,#e6f6ec 1px 2px);"></div>
<div style="left:378px;top:290px;width:468px;height:1px;background:repeating-linear-gradient(90deg,#111 0 1px,transparent 1px 2px);"></div>
<div style="left:378px;top:199px;width:1px;height:92px;background:repeating-linear-gradient(180deg,#111 0 1px,#e6f6ec 1px 2px);"></div>
<div style="left:730px;top:241px;width:1px;height:50px;background:repeating-linear-gradient(180deg,#111 0 1px,#e6f6ec 1px 2px);"></div>
<div style="left:26px;top:290px;width:352px;height:1px;background:#9dc3e6;"></div>
<div style="left:0px;top:269px;width:1578px;height:1px;background:#8c8c8c;"></div>
<span class="t" style="left:212.50px;top:202px;font-size:16px;color:#fff;transform:scaleX(0.8119);font-weight:700;">NOMBRE DEL FORMATO :</span>
<span class="t" style="left:299.80px;top:223px;font-size:16px;color:#fff;transform:scaleX(0.8165);font-weight:700;">EMPRESA :</span>
<span class="t" style="left:380.80px;top:201px;font-size:16px;color:#000;transform:scaleX(0.8189);font-weight:700;">REGISTRO DE CLIENTES</span>
<span class="t" style="left:380.80px;top:222px;font-size:16px;color:#000;transform:scaleX(0.8085);font-weight:700;">DOMINANDO OFIMATICA</span>
<span class="t" style="left:169.50px;top:247px;font-size:18.67px;color:#fff;transform:scaleX(0.8308);-webkit-text-stroke:0.45px #fff;">CLIENTE</span>
<span class="t" style="left:512.50px;top:247px;font-size:18.67px;color:#fff;transform:scaleX(0.8019);-webkit-text-stroke:0.45px #fff;">DIRECCIÓN</span>
<span class="t" style="left:747.00px;top:247px;font-size:18.67px;color:#fff;transform:scaleX(0.8347);-webkit-text-stroke:0.45px #fff;">TELÉFONO</span>
<span class="t" style="left:28.30px;top:273px;font-size:14.67px;color:#000;transform:scaleX(0.9085);">Patricia Lorena Rodriguez Silva</span>
<span class="t" style="left:380.80px;top:273px;font-size:14.67px;color:#000;transform:scaleX(0.8978);">Dirección 01</span>
<span class="t" style="left:757.50px;top:273px;font-size:14.67px;color:#000;transform:scaleX(0.8308);">900000001</span>
<div style="left:0px;top:354px;width:24px;height:20px;background:#e1e1e1;"></div>
<div style="left:24px;top:353px;width:2px;height:22px;background:#107c41;"></div>
<div style="left:3px;top:219px;width:22px;height:1px;background:linear-gradient(90deg,#ececec,#d6d6d6 30%);"></div>
<div style="left:3px;top:240px;width:22px;height:1px;background:linear-gradient(90deg,#ececec,#d6d6d6 30%);"></div>
<div style="left:3px;top:290px;width:22px;height:1px;background:linear-gradient(90deg,#ececec,#d6d6d6 30%);"></div>
<div style="left:3px;top:311px;width:22px;height:1px;background:linear-gradient(90deg,#ececec,#d6d6d6 30%);"></div>
<div style="left:3px;top:332px;width:22px;height:1px;background:linear-gradient(90deg,#ececec,#d6d6d6 30%);"></div>
<div style="left:3px;top:353px;width:22px;height:1px;background:linear-gradient(90deg,#ececec,#d6d6d6 30%);"></div>
<div style="left:3px;top:374px;width:22px;height:1px;background:linear-gradient(90deg,#ececec,#d6d6d6 30%);"></div>
<div style="left:3px;top:395px;width:22px;height:1px;background:linear-gradient(90deg,#ececec,#d6d6d6 30%);"></div>
<div style="left:3px;top:416px;width:22px;height:1px;background:linear-gradient(90deg,#ececec,#d6d6d6 30%);"></div>
<div style="left:3px;top:437px;width:22px;height:1px;background:linear-gradient(90deg,#ececec,#d6d6d6 30%);"></div>
<div style="left:3px;top:458px;width:22px;height:1px;background:linear-gradient(90deg,#ececec,#d6d6d6 30%);"></div>
<div style="left:3px;top:479px;width:22px;height:1px;background:linear-gradient(90deg,#ececec,#d6d6d6 30%);"></div>
<div style="left:3px;top:500px;width:22px;height:1px;background:linear-gradient(90deg,#ececec,#d6d6d6 30%);"></div>
<div style="left:3px;top:521px;width:22px;height:1px;background:linear-gradient(90deg,#ececec,#d6d6d6 30%);"></div>
<div style="left:3px;top:542px;width:22px;height:1px;background:linear-gradient(90deg,#ececec,#d6d6d6 30%);"></div>
<div style="left:3px;top:563px;width:22px;height:1px;background:linear-gradient(90deg,#ececec,#d6d6d6 30%);"></div>
<div style="left:3px;top:584px;width:22px;height:1px;background:linear-gradient(90deg,#ececec,#d6d6d6 30%);"></div>
<div style="left:3px;top:605px;width:22px;height:1px;background:linear-gradient(90deg,#ececec,#d6d6d6 30%);"></div>
<div style="left:3px;top:626px;width:22px;height:1px;background:linear-gradient(90deg,#ececec,#d6d6d6 30%);"></div>
<div style="left:3px;top:647px;width:22px;height:1px;background:linear-gradient(90deg,#ececec,#d6d6d6 30%);"></div>
<div style="left:3px;top:668px;width:22px;height:1px;background:linear-gradient(90deg,#ececec,#d6d6d6 30%);"></div>
<div style="left:3px;top:689px;width:22px;height:1px;background:linear-gradient(90deg,#ececec,#d6d6d6 30%);"></div>
<div style="left:3px;top:710px;width:22px;height:1px;background:linear-gradient(90deg,#ececec,#d6d6d6 30%);"></div>
<div style="left:3px;top:731px;width:22px;height:1px;background:linear-gradient(90deg,#ececec,#d6d6d6 30%);"></div>
<div style="left:3px;top:752px;width:22px;height:1px;background:linear-gradient(90deg,#ececec,#d6d6d6 30%);"></div>
<div style="left:3px;top:773px;width:22px;height:1px;background:linear-gradient(90deg,#ececec,#d6d6d6 30%);"></div>
<div style="left:3px;top:794px;width:22px;height:1px;background:linear-gradient(90deg,#ececec,#d6d6d6 30%);"></div>
<span class="t" style="left:9.39px;top:202px;font-size:15.4px;color:#3f3f3f;transform:scaleX(0.8200);">1</span>
<span class="t" style="left:9.39px;top:223px;font-size:15.4px;color:#3f3f3f;transform:scaleX(0.8200);">2</span>
<span class="t" style="left:9.39px;top:252px;font-size:15.4px;color:#3f3f3f;transform:scaleX(0.8200);">3</span>
<span class="t" style="left:9.39px;top:273px;font-size:15.4px;color:#3f3f3f;transform:scaleX(0.8200);">4</span>
<span class="t" style="left:9.39px;top:294px;font-size:15.4px;color:#3f3f3f;transform:scaleX(0.8200);">5</span>
<span class="t" style="left:9.39px;top:315px;font-size:15.4px;color:#3f3f3f;transform:scaleX(0.8200);">6</span>
<span class="t" style="left:9.39px;top:336px;font-size:15.4px;color:#3f3f3f;transform:scaleX(0.8200);">7</span>
<span class="t" style="left:9.39px;top:357px;font-size:15.4px;color:#1e6b41;transform:scaleX(0.8200);">8</span>
<span class="t" style="left:9.39px;top:378px;font-size:15.4px;color:#3f3f3f;transform:scaleX(0.8200);">9</span>
<span class="t" style="left:5.88px;top:399px;font-size:15.4px;color:#3f3f3f;transform:scaleX(0.8200);">10</span>
<span class="t" style="left:6.35px;top:420px;font-size:15.4px;color:#3f3f3f;transform:scaleX(0.8200);">11</span>
<span class="t" style="left:5.88px;top:441px;font-size:15.4px;color:#3f3f3f;transform:scaleX(0.8200);">12</span>
<span class="t" style="left:5.88px;top:462px;font-size:15.4px;color:#3f3f3f;transform:scaleX(0.8200);">13</span>
<span class="t" style="left:5.88px;top:483px;font-size:15.4px;color:#3f3f3f;transform:scaleX(0.8200);">14</span>
<span class="t" style="left:5.88px;top:504px;font-size:15.4px;color:#3f3f3f;transform:scaleX(0.8200);">15</span>
<span class="t" style="left:5.88px;top:525px;font-size:15.4px;color:#3f3f3f;transform:scaleX(0.8200);">16</span>
<span class="t" style="left:5.88px;top:546px;font-size:15.4px;color:#3f3f3f;transform:scaleX(0.8200);">17</span>
<span class="t" style="left:5.88px;top:567px;font-size:15.4px;color:#3f3f3f;transform:scaleX(0.8200);">18</span>
<span class="t" style="left:5.88px;top:588px;font-size:15.4px;color:#3f3f3f;transform:scaleX(0.8200);">19</span>
<span class="t" style="left:5.88px;top:609px;font-size:15.4px;color:#3f3f3f;transform:scaleX(0.8200);">20</span>
<span class="t" style="left:5.88px;top:630px;font-size:15.4px;color:#3f3f3f;transform:scaleX(0.8200);">21</span>
<span class="t" style="left:5.88px;top:651px;font-size:15.4px;color:#3f3f3f;transform:scaleX(0.8200);">22</span>
<span class="t" style="left:5.88px;top:672px;font-size:15.4px;color:#3f3f3f;transform:scaleX(0.8200);">23</span>
<span class="t" style="left:5.88px;top:693px;font-size:15.4px;color:#3f3f3f;transform:scaleX(0.8200);">24</span>
<span class="t" style="left:5.88px;top:714px;font-size:15.4px;color:#3f3f3f;transform:scaleX(0.8200);">25</span>
<span class="t" style="left:5.88px;top:735px;font-size:15.4px;color:#3f3f3f;transform:scaleX(0.8200);">26</span>
<span class="t" style="left:5.88px;top:756px;font-size:15.4px;color:#3f3f3f;transform:scaleX(0.8200);">27</span>
<span class="t" style="left:5.88px;top:777px;font-size:15.4px;color:#3f3f3f;transform:scaleX(0.8200);">28</span>
<span class="t" style="left:5.88px;top:798px;font-size:15.4px;color:#3f3f3f;transform:scaleX(0.8200);">29</span>
<div style="left:377px;top:352px;width:355px;height:24px;background:transparent;border:2px solid #10703f;box-sizing:border-box;"></div>
<div style="left:727px;top:371px;width:7px;height:7px;background:#fff;"></div>
<div style="left:728px;top:372px;width:5px;height:5px;background:#1a7444;"></div>
<div style="left:1580px;top:179px;width:20px;height:627px;background:#f3f3f3;border-radius:9px;"></div>
<svg style="left:1585px;top:183px;" width="9" height="7" viewBox="0 0 9 7"><path d="M4.5 0.4 L8.8 6.6 H0.2 Z" fill="#707070" stroke="#707070" stroke-width="0.6" stroke-linejoin="round"/></svg>
<div style="left:1585px;top:195px;width:9px;height:572px;background:#707070;border-radius:4.5px;"></div>
<svg style="left:1585px;top:796px;" width="9" height="7" viewBox="0 0 9 7"><path d="M4.5 6.6 L8.8 0.4 H0.2 Z" fill="#707070" stroke="#707070" stroke-width="0.6" stroke-linejoin="round"/></svg>
<div style="left:0px;top:806px;width:1600px;height:32px;background:#f0f0f0;"></div>
<div style="left:0px;top:806px;width:1579px;height:1px;background:#dcdcdc;"></div>
<svg style="left:28px;top:816px;" width="8" height="11" viewBox="0 0 8 11"><path d="M6 1 L1.2 5.5 L6 10" fill="none" stroke="#8a8a8a" stroke-width="1.1"/></svg>
<svg style="left:61px;top:816px;" width="8" height="11" viewBox="0 0 8 11"><path d="M1.5 1 L6.3 5.5 L1.5 10" fill="none" stroke="#8a8a8a" stroke-width="1.1"/></svg>
<div style="left:116px;top:810px;width:98px;height:23.5px;background:#ffc000;border-radius:4px;"></div>
<span class="t" style="left:125.00px;top:815px;font-size:14.5px;color:#222;transform:scaleX(0.8627);">PRODUCTOS</span>
<div style="left:217.5px;top:813.5px;width:1px;height:17px;background:#c8c8c8;"></div>
<div style="left:223px;top:806px;width:76.5px;height:27.5px;background:linear-gradient(180deg,#fbfbfb 0%,#fbf7ea 35%,#fdf0c0 75%,#fde9a0 100%);border-radius:0 0 5px 5px;box-shadow:0 0 2px rgba(0,0,0,0.25);"></div>
<span class="t" style="left:231.30px;top:812px;font-size:14.5px;color:#111;transform:scaleX(0.8363);-webkit-text-stroke:0.3px #111;">CLIENTES</span>
<div style="left:231px;top:829px;width:60px;height:2px;background:#107c41;border-radius:1px;"></div>
<div style="left:303px;top:813.5px;width:1px;height:17px;background:#c8c8c8;"></div>
<div style="left:308px;top:810px;width:80px;height:23.5px;background:#00b050;border-radius:4px;"></div>
<span class="t" style="left:317.00px;top:815px;font-size:14.5px;color:#1a1a1a;transform:scaleX(0.8704);">CONTROL</span>
<div style="left:392px;top:813.5px;width:1px;height:17px;background:#c8c8c8;"></div>
<svg style="left:435px;top:816px;" width="11" height="11" viewBox="0 0 11 11"><path d="M5.5 0.5 V10.5 M0.5 5.5 H10.5" stroke="#8a8a8a" stroke-width="1.1"/></svg>
<div style="left:962.3px;top:818.5px;width:2px;height:2px;background:#3b3b3b;border-radius:1px;"></div>
<div style="left:962.3px;top:822px;width:2px;height:2px;background:#3b3b3b;border-radius:1px;"></div>
<div style="left:962.3px;top:825.5px;width:2px;height:2px;background:#3b3b3b;border-radius:1px;"></div>
<div style="left:979px;top:812px;width:600px;height:19px;background:#f3f3f3;border-radius:9px;"></div>
<svg style="left:984px;top:817px;" width="7" height="9" viewBox="0 0 7 9"><path d="M0.4 4.5 L6.6 0.2 V8.8 Z" fill="#707070" stroke="#707070" stroke-width="0.6" stroke-linejoin="round"/></svg>
<div style="left:996px;top:817px;width:564px;height:9px;background:#707070;border-radius:4.5px;"></div>
<svg style="left:1566px;top:817px;" width="7" height="9" viewBox="0 0 7 9"><path d="M6.6 4.5 L0.4 0.2 V8.8 Z" fill="#707070" stroke="#707070" stroke-width="0.6" stroke-linejoin="round"/></svg>
<div style="left:0px;top:838px;width:1600px;height:22px;background:#f3f3f3;"></div>
<div style="left:0px;top:838px;width:1600px;height:1px;background:#fbfbfb;"></div>
<div style="left:0px;top:860px;width:1600px;height:1px;background:#111;"></div>
<span class="t" style="left:7.00px;top:844px;font-size:12px;color:#333;transform:scaleX(0.8838);">Listo</span>
<svg style="left:51px;top:843.5px;" width="15" height="12.5" viewBox="0 0 15 12.5">
<path d="M0.5 11.5 V0.5 H13.5 V4" fill="none" stroke="#3b3b3b" stroke-width="1"/>
<path d="M0.5 2.8 H13.5" stroke="#3b3b3b" stroke-width="1"/>
<path d="M2.5 5.5 H6 M2.5 8 H5" stroke="#3b3b3b" stroke-width="1"/>
<path d="M0.5 11.5 H6" stroke="#3b3b3b" stroke-width="1"/>
<circle cx="10.2" cy="8.4" r="3.6" fill="#f3f3f3" stroke="#3b3b3b" stroke-width="1"/>
<circle cx="10.2" cy="8.4" r="1.7" fill="#3b3b3b"/>
</svg>
<svg style="left:83px;top:842.5px;" width="14" height="14" viewBox="0 0 14 14">
<circle cx="5.6" cy="1.9" r="1.5" fill="none" stroke="#3b3b3b" stroke-width="1"/>
<path d="M0.6 4.4 L4 5.4 H7.2 L10.6 4.4" fill="none" stroke="#3b3b3b" stroke-width="1" stroke-linejoin="round"/>
<path d="M4 5.4 V8.6 L2 13.2 M7.2 5.4 V8.6 L8 10" fill="none" stroke="#3b3b3b" stroke-width="1"/>
<path d="M8.6 9 L13.2 13.6 M13.2 9 L8.6 13.6" stroke="#3b3b3b" stroke-width="1.1"/>
</svg>
<span class="t" style="left:100.80px;top:844px;font-size:11.6px;color:#2b2b2b;transform:scaleX(0.9856);-webkit-text-stroke:0.35px #2b2b2b;">Accesibilidad:</span>
<span class="t" style="left:175.00px;top:844px;font-size:11.6px;color:#2b2b2b;transform:scaleX(0.7184);-webkit-text-stroke:0.35px #2b2b2b;">es</span>
<span class="t" style="left:188.20px;top:844px;font-size:11.6px;color:#2b2b2b;transform:scaleX(0.8947);-webkit-text-stroke:0.35px #2b2b2b;">necesario</span>
<span class="t" style="left:237.50px;top:844px;font-size:11.6px;color:#2b2b2b;transform:scaleX(1.0836);-webkit-text-stroke:0.35px #2b2b2b;">investigar</span>
<div style="left:1300px;top:839px;width:40px;height:21px;background:#e3e3e3;"></div>
<svg style="left:1313px;top:842px;" width="13" height="13" viewBox="0 0 13 13"><rect x="0.5" y="0.5" width="12" height="12" fill="#fff" stroke="#1f1f1f" stroke-width="1"/><path d="M4.5 0.5 V12.5 M8.5 0.5 V12.5 M0.5 4.5 H12.5 M0.5 8.5 H12.5" stroke="#1f1f1f" stroke-width="1"/></svg>
<svg style="left:1353px;top:842px;" width="14" height="14" viewBox="0 0 14 14"><rect x="0.5" y="0.5" width="13" height="12.5" rx="1.2" fill="none" stroke="#2b2b2b" stroke-width="1"/><rect x="3.5" y="3.5" width="7" height="6.8" fill="none" stroke="#2b2b2b" stroke-width="1"/><path d="M5 5.6 H9 M5 7.8 H9" stroke="#2b2b2b" stroke-width="0.9"/></svg>
<svg style="left:1393px;top:842px;" width="14" height="14" viewBox="0 0 14 14"><rect x="0.5" y="0.5" width="13" height="12.5" fill="none" stroke="#2b2b2b" stroke-width="1"/><path d="M4.5 0.5 V7.5 H9.5 V0.5" fill="none" stroke="#2b2b2b" stroke-width="1"/></svg>
<div style="left:1426px;top:848px;width:8px;height:1px;background:#3b3b3b;"></div>
<div style="left:1439px;top:848.3px;width:100px;height:1px;background:#7a7574;"></div>
<div style="left:1487px;top:844px;width:5px;height:11px;background:#6f6a69;"></div>
<svg style="left:1543.5px;top:844.5px;" width="9" height="9" viewBox="0 0 9 9"><path d="M4.4 0.4 V8.4 M0.4 4.4 H8.4" stroke="#3b3b3b" stroke-width="1"/></svg>
<span class="t" style="left:1565.40px;top:844px;font-size:11.5px;color:#333;transform:scaleX(0.8838);">100%</span>
</body></html>
